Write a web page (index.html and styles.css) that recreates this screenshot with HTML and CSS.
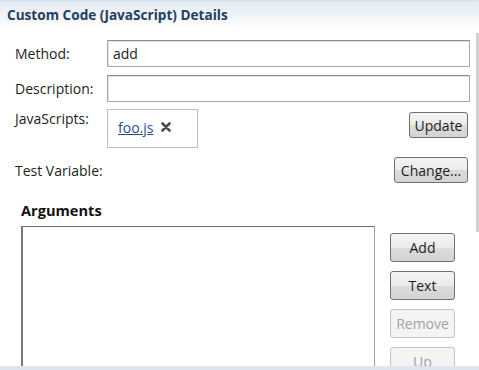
FILE: index.html
```html
<!DOCTYPE html>
<html lang="en">

<head>
    <meta charset="UTF-8">
    <meta name="viewport" content="width=device-width, initial-scale=1.0">
    <title>Custom Code Details</title>
    <link rel="stylesheet" href="styles.css">
</head>

<body>
    <div class="panel">
        <div class="panel-title">Custom Code (JavaScript) Details</div>

        <div class="form">
            <div class="row">
                <label class="label">Method:</label>
                <div class="field">add</div>
            </div>
            <div class="row">
                <label class="label">Description:</label>
                <div class="field"></div>
            </div>
            <div class="row row-top">
                <label class="label label-top">JavaScripts:</label>
                <div class="scripts">
                    <a class="script-link" href="#">foo.js</a>
                    <svg class="remove-icon" width="10" height="10" viewBox="0 0 10 10">
                        <path d="M1.5 1.5 L8.5 8.5 M8.5 1.5 L1.5 8.5" stroke="#4a4a4a" stroke-width="2.6" stroke-linecap="round" />
                    </svg>
                </div>
                <button class="btn btn-update">Update</button>
            </div>
            <div class="row row-test">
                <label class="label">Test Variable:</label>
                <div class="spacer"></div>
                <button class="btn btn-change">Change...</button>
            </div>
        </div>

        <div class="args">
            <div class="args-title">Arguments</div>
            <div class="args-body">
                <div class="args-list"></div>
                <div class="args-buttons">
                    <button class="btn btn-side">Add</button>
                    <button class="btn btn-side">Text</button>
                    <button class="btn btn-side" disabled>Remove</button>
                    <button class="btn btn-side" disabled>Up</button>
                </div>
            </div>
        </div>

        <div class="scroll-thumb"></div>
        <div class="bottom-strip"></div>
    </div>
</body>

</html>
```

FILE: styles.css
```css
html,
body {
    margin: 0;
    padding: 0;
    background: #fff;
}

body {
    width: 479px;
    height: 370px;
    overflow: hidden;
    font-family: "Open Sans", "Noto Sans", sans-serif;
    font-size: 14px;
    color: #1e1e1e;
}

.panel {
    position: relative;
    height: 370px;
    overflow: hidden;
}

.panel-title {
    height: 27px;
    line-height: 28px;
    padding-left: 7px;
    border-top: 1px solid #d6e0ea;
    background: linear-gradient(#e4ebf3, #f4f7fa 70%, #ffffff);
    font-size: 13.6px;
    font-weight: bold;
    color: #243f5f;
}

.form {
    display: flex;
    flex-direction: column;
    padding: 12px 9px 0 15px;
}

.row {
    display: flex;
    align-items: center;
    margin-bottom: 8px;
}

.row-top {
    align-items: flex-start;
    margin-top: -1px;
    margin-bottom: 9px;
}

.label {
    width: 92px;
    flex: none;
    font-size: 14px;
}

.label-top {
    margin-top: 0;
}

.field {
    flex: 1;
    height: 25px;
    line-height: 25px;
    padding-left: 5px;
    border: 1px solid #a9a9a9;
    border-top-color: #8c8c8c;
    box-shadow: inset 1px 1px 0 #e2e2e2;
}

.scripts {
    display: flex;
    align-items: center;
    gap: 8px;
    box-sizing: border-box;
    width: 91px;
    height: 39px;
    padding-left: 10px;
    border: 1px solid #b4c0cc;
}

.script-link {
    color: #1f4f8f;
    text-decoration: underline;
    margin-top: -3px;
}

.remove-icon {
    margin-top: -3px;
}

.spacer {
    flex: 1;
}

.btn {
    font-family: "Open Sans", "Noto Sans", sans-serif;
    font-size: 14px;
    color: #1e1e1e;
    height: 26px;
    padding: 0 4px;
    border: 1px solid #707070;
    border-radius: 3px;
    background: linear-gradient(#f4f4f4, #ebebeb 50%, #dcdcdc 51%, #d4d4d4);
    cursor: pointer;
}

.btn:disabled {
    color: #a3a3a3;
    border-color: #c3c3c3;
    background: #f4f4f4;
}

.btn-update {
    margin-left: auto;
    margin-top: 3px;
    margin-right: 2px;
    width: 59px;
}

.btn-change {
    margin-right: 2px;
    width: 74px;
}

.args {
    padding: 10px 0 0 21px;
}

.args-title {
    font-size: 14.6px;
    font-weight: bold;
    color: #111;
    line-height: 18px;
    margin-bottom: 7px;
}

.args-body {
    display: flex;
    gap: 15px;
}

.args-list {
    box-sizing: border-box;
    width: 354px;
    height: 160px;
    border: 1px solid #a0a0a0;
    border-top-color: #6e6e6e;
    border-left: 2px solid #7a7a7a;
}

.args-buttons {
    display: flex;
    flex-direction: column;
    gap: 9px;
    padding-top: 7px;
}

.btn-side {
    width: 65px;
    height: 29px;
}

.scroll-thumb {
    position: absolute;
    right: 0;
    top: 33px;
    width: 3px;
    height: 199px;
    background: #d2d2d2;
}

.bottom-strip {
    position: absolute;
    left: 0;
    right: 0;
    bottom: 0;
    height: 4px;
    background: #dde5ee;
}
```
